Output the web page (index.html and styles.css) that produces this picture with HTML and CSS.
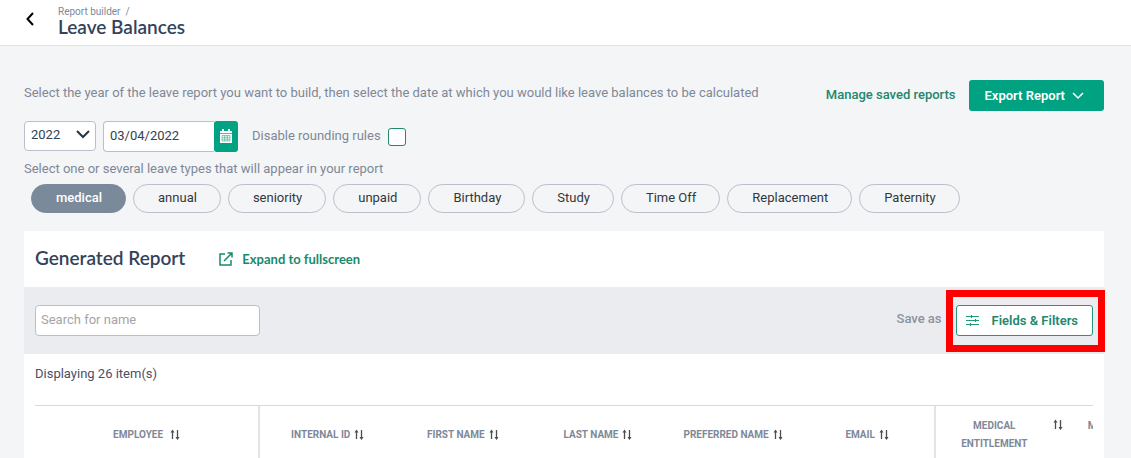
FILE: index.html
```html
<!DOCTYPE html>
<html lang="en">
<head>
    <meta charset="UTF-8">
    <meta name="viewport" content="width=device-width, initial-scale=1.0">
    <title>Leave Balances</title>
    <link rel="stylesheet" href="styles.css">
</head>
<body>
    <svg class="sprite" aria-hidden="true">
        <symbol id="sort" viewBox="0 0 10 12">
            <path d="M2.500 10V2M7.500 1v9" fill="none" stroke="currentColor" stroke-width="1.300"/>
            <path d="M.5 3.500l2-3 2 3zM5.500 8l2 3 2-3z" fill="currentColor"/>
        </symbol>
    </svg>

    <header class="topbar">
        <a class="back" href="#" aria-label="Back">
            <svg width="8" height="14" viewBox="0 0 8 14"><path d="M7 1L1.500 7L7 13" fill="none" stroke="#000" stroke-width="2"/></svg>
        </a>
        <div>
            <div class="breadcrumb">Report builder&nbsp; /</div>
            <h1>Leave Balances</h1>
        </div>
    </header>

    <main>
        <div class="intro">
            <p>Select the year of the leave report you want to build, then select the date at which you would like leave balances to be calculated</p>
            <a class="manage" href="#">Manage saved reports</a>
            <button class="export" type="button">
                Export Report
                <svg width="12" height="8" viewBox="0 0 12 8"><path d="M1 1l5 5 5-5" fill="none" stroke="#fff" stroke-width="1.500"/></svg>
            </button>
        </div>

        <form class="options">
            <div class="year">
                <select aria-label="Year">
                    <option>2022</option>
                    <option>2021</option>
                </select>
                <svg width="14" height="9" viewBox="0 0 14 9"><path d="M1 1l6 6 6-6" fill="none" stroke="#263640" stroke-width="2"/></svg>
            </div>
            <div class="date">
                <input type="text" value="03/04/2022" aria-label="Date">
                <button type="button" aria-label="Open calendar">
                    <svg width="12" height="14" viewBox="0 0 12 14">
                        <path d="M0 2h2V0h2v2h4V0h2v2h2v12H0z" fill="#fff"/>
                        <path d="M0 4.500h12" stroke="#00a281" stroke-width=".7"/>
                        <path d="M2 6.500h8v5.500H2zM4.700 6.500v5.500M7.300 6.500v5.500M2 8.300h8M2 10.200h8" fill="none" stroke="#00a281" stroke-width=".5"/>
                    </svg>
                </button>
            </div>
            <label for="rounding">Disable rounding rules</label>
            <input type="checkbox" id="rounding">
        </form>

        <p class="types-label">Select one or several leave types that will appear in your report</p>
        <div class="types">
            <button class="pill active" type="button">medical</button>
            <button class="pill" type="button">annual</button>
            <button class="pill" type="button">seniority</button>
            <button class="pill" type="button">unpaid</button>
            <button class="pill" type="button">Birthday</button>
            <button class="pill" type="button">Study</button>
            <button class="pill" type="button">Time Off</button>
            <button class="pill" type="button">Replacement</button>
            <button class="pill" type="button">Paternity</button>
        </div>

        <section class="report">
            <div class="report-head">
                <h2>Generated Report</h2>
                <a class="expand" href="#">
                    <svg width="14" height="14" viewBox="0 0 14 14" fill="none" stroke="currentColor" stroke-width="1.500"><path d="M6 2H1v11h11V8M5 9l8-8M8.500 1H13v4.500"/></svg>
                    Expand to fullscreen
                </a>
            </div>

            <div class="toolbar">
                <input class="search" type="text" placeholder="Search for name" aria-label="Search for name">
                <button class="save" type="button">Save as</button>
                <div class="highlight">
                    <button class="filters" type="button">
                        <svg width="13" height="13" viewBox="0 0 13 13" fill="none" stroke="#22987b" stroke-width="1.200"><path d="M0 2.500h13M0 6.500h13M0 10.500h13M5.500 1v3M9.500 5v3M4.500 9v3"/></svg>
                        Fields &amp; Filters
                    </button>
                </div>
            </div>

            <p class="count">Displaying 26 item(s)</p>

            <div class="table-wrap">
                <table>
                    <thead>
                        <tr>
                            <th class="employee"><div>EMPLOYEE <svg class="sort"><use href="#sort"/></svg></div></th>
                            <th><div>INTERNAL ID <svg class="sort"><use href="#sort"/></svg></div></th>
                            <th><div>FIRST NAME <svg class="sort"><use href="#sort"/></svg></div></th>
                            <th><div>LAST NAME <svg class="sort"><use href="#sort"/></svg></div></th>
                            <th><div>PREFERRED NAME <svg class="sort"><use href="#sort"/></svg></div></th>
                            <th class="divided"><div>EMAIL <svg class="sort"><use href="#sort"/></svg></div></th>
                            <th class="balance"><div><span>MEDICAL ENTITLEMENT</span> <svg class="sort"><use href="#sort"/></svg></div></th>
                            <th class="next"><div>MEDICAL</div></th>
                        </tr>
                    </thead>
                </table>
            </div>
        </section>
    </main>
</body>
</html>
```
FILE: styles.css
```css
* {
    box-sizing: border-box;
}
body {
    margin: 0;
    background: #f4f5f7;
    color: #7e8898;
    font: 13px/20px Roboto, sans-serif;
}
h1, h2, p {
    margin: 0;
}
h1, h2 {
    color: #34425a;
    font: 600 19px/20px Lato, sans-serif;
}
a {
    text-decoration: none;
}
button, input, select {
    margin: 0;
    font: inherit;
}
button {
    padding: 0;
    border: none;
    background: none;
    cursor: pointer;
}
svg {
    flex: none;
}
.sprite {
    position: absolute;
    width: 0;
    height: 0;
}

.topbar {
    display: flex;
    align-items: center;
    gap: 24px;
    height: 46px;
    padding: 0 26px 2px;
    border-bottom: 1px solid #dfe1e4;
    background: #fff;
}
.breadcrumb {
    padding-top: 1px;
    font-size: 10px;
    line-height: 10px;
}

main {
    padding: 34px 27px 0 24px;
}
.intro {
    display: flex;
    align-items: center;
}
.intro p {
    flex: 1;
    padding-bottom: 6px;
}
.manage {
    margin-right: 13px;
    padding-bottom: 2px;
    color: #22876c;
    font-weight: 500;
}
.export {
    display: flex;
    align-items: center;
    gap: 7px;
    height: 31px;
    padding: 0 20px 0 16px;
    border-radius: 3px;
    background: #00a281;
    color: #fff;
    font-weight: 600;
}

.options {
    display: flex;
    align-items: center;
    margin-top: 10px;
}
.year {
    position: relative;
    width: 72px;
    margin-right: 7px;
    padding-bottom: 1px;
}
.year select {
    display: block;
    width: 100%;
    height: 30px;
    padding: 0 6px 2px;
    border: 1px solid #b9bfcb;
    border-radius: 4px;
    background: #fff;
    color: #33424e;
    appearance: none;
}
.year svg {
    position: absolute;
    top: 9px;
    right: 6px;
    pointer-events: none;
}
.date {
    display: flex;
    margin-right: 14px;
}
.date input {
    width: 111px;
    height: 31px;
    padding: 0 6px 2px;
    border: 1px solid #b9bfcb;
    border-right: none;
    border-radius: 4px 0 0 4px;
    background: #fff;
    color: #33424e;
}
.date button {
    display: flex;
    align-items: center;
    justify-content: center;
    width: 24px;
    padding-bottom: 2px;
    border-radius: 3px;
    background: #00a281;
}
.options label {
    padding-bottom: 1px;
}
#rounding {
    width: 18px;
    height: 18px;
    margin-left: 7px;
    border: 1px solid #22876c;
    border-radius: 3px;
    background: #fff;
    appearance: none;
}
#rounding:checked {
    background: #00a281;
}

.types-label {
    margin-top: 7px;
}
.types {
    display: flex;
    flex-wrap: wrap;
    gap: 7px;
    margin-top: 5px;
    padding-left: 7px;
}
.pill {
    height: 29px;
    padding: 0 23px 2px 24px;
    border: 1px solid #b9bfcb;
    border-radius: 15px;
    color: #33373d;
}
.pill.active {
    border-color: #7b8a9b;
    background: #7b8a9b;
    color: #fff;
    font-weight: 500;
}

.report {
    margin-top: 18px;
    background: #fff;
}
.report-head {
    display: flex;
    align-items: center;
    gap: 34px;
    height: 56px;
    padding: 0 11px;
}
.report-head h2 {
    padding-bottom: 3px;
}
.expand {
    display: flex;
    align-items: center;
    gap: 9px;
    color: #178a6c;
    font: 700 13px/20px Lato, sans-serif;
}
.toolbar {
    display: flex;
    align-items: center;
    height: 67px;
    padding: 0 11px;
    background: #ebecf0;
}
.search {
    width: 225px;
    height: 31px;
    margin-right: auto;
    padding: 0 5px 2px;
    border: 1px solid #b9bfcb;
    border-radius: 4px;
    background: #fff;
}
.search::placeholder {
    color: #a5a5a5;
}
.save {
    margin-right: 14px;
    padding-bottom: 3px;
    color: #8a93a0;
    font-weight: 500;
}
.highlight {
    position: relative;
}
.highlight::after {
    content: "";
    position: absolute;
    inset: -15px -12px -16px -10px;
    border: 7px solid #fe0000;
    pointer-events: none;
}
.filters {
    display: flex;
    align-items: center;
    gap: 13px;
    height: 31px;
    padding: 0 14px 0 9px;
    border: 1px solid #22987b;
    border-radius: 3px;
    background: #fff;
    color: #22876c;
    font-weight: 600;
}

.count {
    padding: 10px 11px 21px;
    color: #4a5068;
}
.table-wrap {
    margin: 0 11px;
    border-top: 1px solid #d6d8db;
    overflow: hidden;
}
table {
    width: 1171px;
    border-collapse: separate;
    border-spacing: 0;
    table-layout: fixed;
}
th {
    width: 135px;
    padding: 11px 0 5px;
    font-size: 10px;
    font-weight: 700;
    line-height: 18px;
}
th div {
    display: flex;
    align-items: center;
    justify-content: center;
    gap: 4px;
    height: 36px;
}
.employee {
    width: 225px;
    border-right: 2px solid #e2e4e7;
}
.employee div {
    gap: 7px;
}
.divided {
    border-right: 2px solid #e2e4e7;
}
.balance div {
    align-items: flex-start;
    gap: 18px;
    padding-left: 10px;
}
.balance span {
    width: 82px;
}
.balance .sort {
    margin-top: 2px;
}
.next div {
    align-items: flex-start;
    justify-content: flex-start;
    padding-left: 17px;
}
.sort {
    width: 10px;
    height: 12px;
    color: #4b4d52;
}
```
